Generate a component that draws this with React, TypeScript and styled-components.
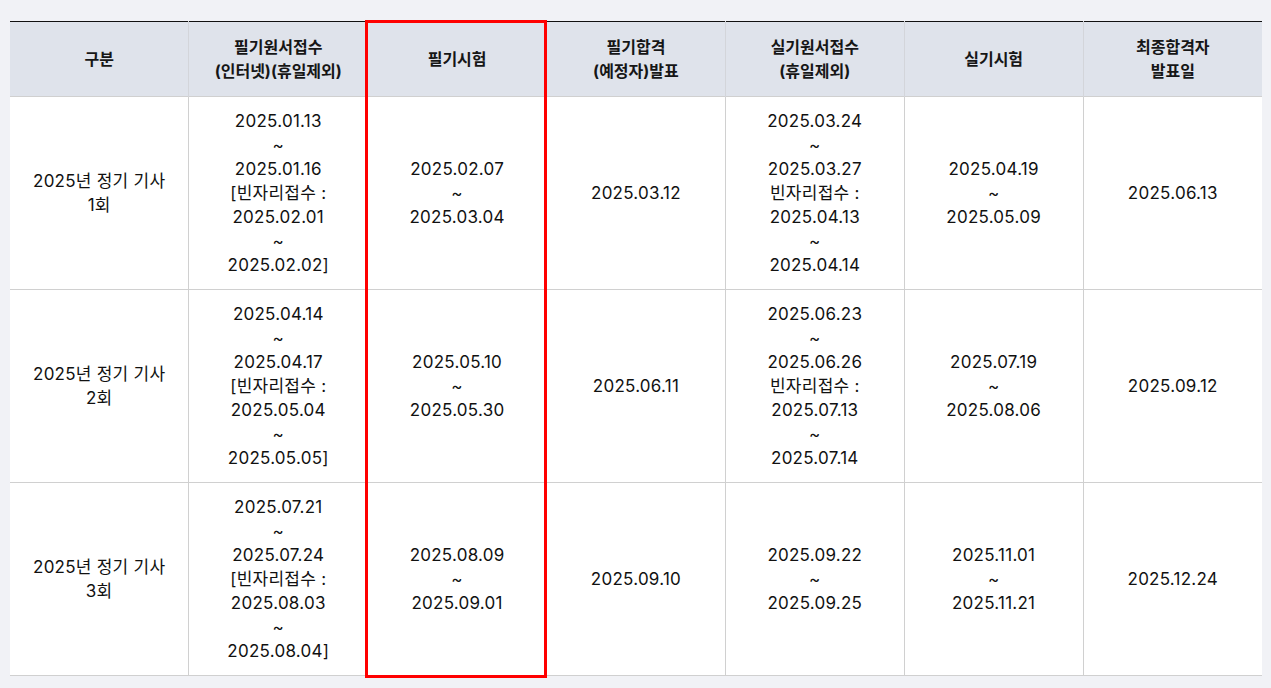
import React from "react";
import styled, { createGlobalStyle } from "styled-components";

const Global = createGlobalStyle`
  html, body { margin: 0; padding: 0; background: #f1f2f6; }
  body { font-family: "Inter", "Noto Sans CJK KR", sans-serif; color: #111; }
`;

const Page = styled.div`
  padding: 21px 9px 12px 10px;
  min-height: 688px;
  box-sizing: border-box;
`;

const Wrap = styled.div`
  position: relative;
`;

const Table = styled.table`
  width: 100%;
  border-collapse: collapse;
  table-layout: fixed;
  border-top: 1px solid #111;
  border-bottom: 1px solid #d0d0d0;
  background: #fff;
`;

const Th = styled.th`
  background: #dfe3eb;
  font-size: 16px;
  font-weight: 700;
  line-height: 24px;
  padding: 13px 2px;
  color: #161616;
  text-align: center;
  vertical-align: middle;
  border-left: 1px solid #d3d5da;
  &:first-child { border-left: none; }
`;

const Td = styled.td`
  font-size: 17px;
  letter-spacing: 0.25px;
  line-height: 24px;
  padding: 12px 2px;
  text-align: center;
  vertical-align: middle;
  color: #111;
  border-top: 1px solid #d0d0d0;
  border-left: 1px solid #d0d0d0;
  &:first-child { border-left: none; }
`;

const Highlight = styled.div`
  position: absolute;
  z-index: 2;
  left: 355px;
  top: -1px;
  height: 658px;
  width: 182px;
  border: 3px solid #ff0000;
  box-sizing: border-box;
  pointer-events: none;
`;

const headers = [
  ["구분"],
  ["필기원서접수", "(인터넷)(휴일제외)"],
  ["필기시험"],
  ["필기합격", "(예정자)발표"],
  ["실기원서접수", "(휴일제외)"],
  ["실기시험"],
  ["최종합격자", "발표일"],
];

const rows: string[][][] = [
  [
    ["2025년 정기 기사", "1회"],
    ["2025.01.13", "~", "2025.01.16", "[빈자리접수 :", "2025.02.01", "~", "2025.02.02]"],
    ["2025.02.07", "~", "2025.03.04"],
    ["2025.03.12"],
    ["2025.03.24", "~", "2025.03.27", "빈자리접수 :", "2025.04.13", "~", "2025.04.14"],
    ["2025.04.19", "~", "2025.05.09"],
    ["2025.06.13"],
  ],
  [
    ["2025년 정기 기사", "2회"],
    ["2025.04.14", "~", "2025.04.17", "[빈자리접수 :", "2025.05.04", "~", "2025.05.05]"],
    ["2025.05.10", "~", "2025.05.30"],
    ["2025.06.11"],
    ["2025.06.23", "~", "2025.06.26", "빈자리접수 :", "2025.07.13", "~", "2025.07.14"],
    ["2025.07.19", "~", "2025.08.06"],
    ["2025.09.12"],
  ],
  [
    ["2025년 정기 기사", "3회"],
    ["2025.07.21", "~", "2025.07.24", "[빈자리접수 :", "2025.08.03", "~", "2025.08.04]"],
    ["2025.08.09", "~", "2025.09.01"],
    ["2025.09.10"],
    ["2025.09.22", "~", "2025.09.25"],
    ["2025.11.01", "~", "2025.11.21"],
    ["2025.12.24"],
  ],
];

const Lines = ({ lines }: { lines: string[] }) => (
  <>
    {lines.map((l, i) => (
      <React.Fragment key={i}>
        {i > 0 && <br />}
        {l}
      </React.Fragment>
    ))}
  </>
);

export default function App() {
  return (
    <Page>
      <Global />
      <Wrap>
        <Table>
          <thead>
            <tr>
              {headers.map((h, i) => (
                <Th key={i}>
                  <Lines lines={h} />
                </Th>
              ))}
            </tr>
          </thead>
          <tbody>
            {rows.map((r, ri) => (
              <tr key={ri}>
                {r.map((c, ci) => (
                  <Td key={ci}>
                    <Lines lines={c} />
                  </Td>
                ))}
              </tr>
            ))}
          </tbody>
        </Table>
        <Highlight />
      </Wrap>
    </Page>
  );
}
